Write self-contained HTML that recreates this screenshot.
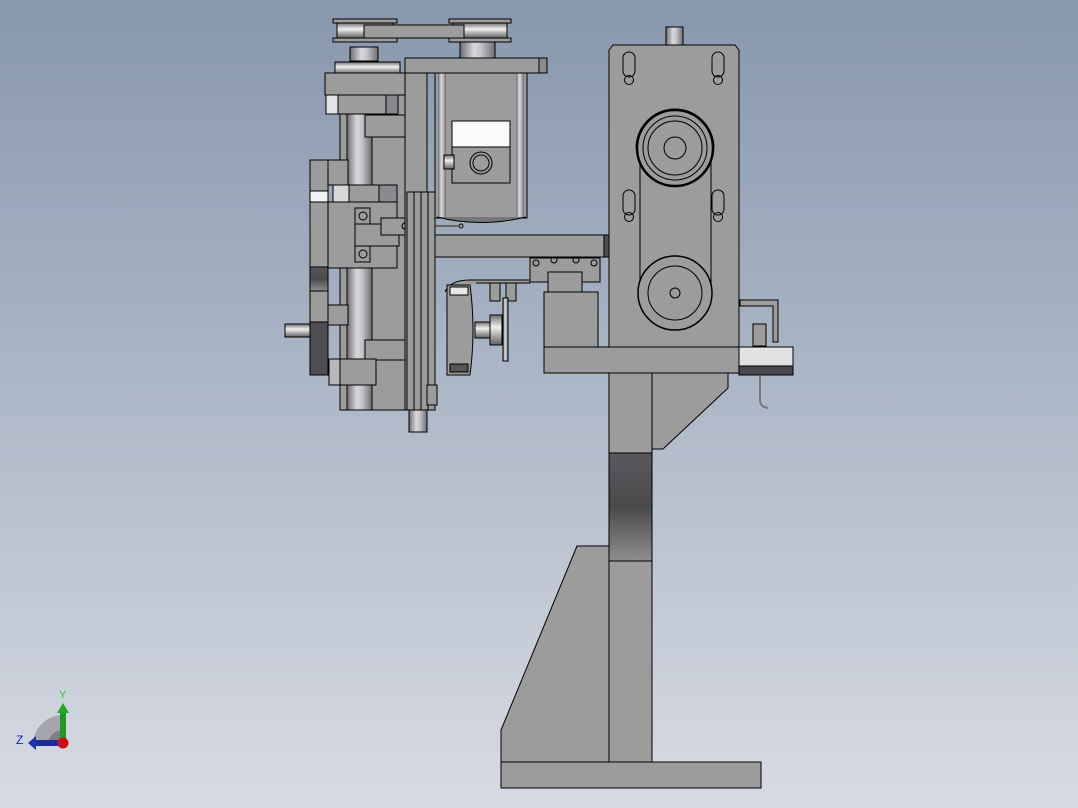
<!DOCTYPE html><html><head><meta charset="utf-8"><style>html,body{margin:0;padding:0;width:1078px;height:808px;overflow:hidden}body{background:linear-gradient(#8797ad,#b2bccb 55%,#d8dbe3)}svg{position:absolute;left:0;top:0}</style></head><body>
<svg width="1078" height="808" viewBox="0 0 1078 808" xmlns="http://www.w3.org/2000/svg">
<defs>
<linearGradient id="cy" x1="0" x2="1" y1="0" y2="0"><stop offset="0" stop-color="#6f6d73"/><stop offset=".4" stop-color="#d8d8dc"/><stop offset=".6" stop-color="#c4c4c8"/><stop offset="1" stop-color="#6f6d73"/></linearGradient>
<linearGradient id="cyh" x1="0" x2="0" y1="0" y2="1"><stop offset="0" stop-color="#707070"/><stop offset=".4" stop-color="#f0f0f0"/><stop offset="1" stop-color="#606060"/></linearGradient>
<linearGradient id="dk" x1="0" x2="0" y1="0" y2="1"><stop offset="0" stop-color="#5a575c"/><stop offset=".5" stop-color="#4a4a4c"/><stop offset="1" stop-color="#8e8e90"/></linearGradient>
</defs>
<g stroke="#000" stroke-width="1" fill="#9c9c9c">
<!-- base -->
<polygon points="577,546 609,546 609,762 501,762 501,730"/>
<rect x="501" y="762" width="260" height="26"/>
<rect x="609" y="373" width="43" height="389"/>
<rect x="609" y="453" width="43" height="108" fill="url(#dk)"/>
<polygon points="652,373 728,373 728,388 663,449 652,449"/>
<!-- right plate -->
<rect x="666" y="27" width="17" height="19" fill="url(#cy)"/>
<polygon points="613,45 735,45 739,50 739,347 609,347 609,50"/>
<g fill="none"><rect x="623" y="52" width="12" height="25" rx="6"/><rect x="712" y="52" width="12" height="25" rx="6"/><circle cx="629" cy="80" r="4.5"/><circle cx="718" cy="80" r="4.5"/>
<rect x="623" y="190" width="12" height="25" rx="6"/><rect x="712" y="190" width="12" height="25" rx="6"/><circle cx="629" cy="217" r="4.5"/><circle cx="718" cy="217" r="4.5"/>
<path d="M636,148 A39,39 0 0 1 714,148"/>
<rect x="640" y="148" width="71" height="145"/></g>
<circle cx="675" cy="148" r="38" stroke-width="2.5"/><circle cx="675" cy="148" r="32" fill="none"/><circle cx="675" cy="148" r="27" fill="none"/><circle cx="675" cy="148" r="11" fill="none"/>
<circle cx="675" cy="293" r="37" stroke-width="1.5"/><circle cx="675" cy="293" r="27" fill="none"/><circle cx="675" cy="293" r="5" fill="none"/>
<rect x="544" y="347" width="195" height="26"/>
<!-- sensor -->
<path d="M740,300 H778 V342 H773 V306 H740 Z"/><rect x="753" y="324" width="13" height="22"/>
<rect x="739" y="347" width="54" height="19" fill="#e2e2e4"/><rect x="739" y="366" width="54" height="9" fill="#4a484c"/>
<path d="M760,375 V400 Q760,407 768,408" fill="none" stroke="#777" stroke-width="2"/>
<!-- arm -->
<rect x="427" y="235" width="182" height="22"/><rect x="604" y="235" width="5" height="22" fill="#4f4d52"/>
<rect x="530" y="258" width="70" height="24"/><rect x="548" y="272" width="34" height="20"/>
<rect x="544" y="292" width="54" height="55"/>
<g fill="none"><circle cx="536" cy="263" r="3"/><circle cx="554" cy="260" r="3"/><circle cx="576" cy="260" r="3"/><circle cx="594" cy="263" r="3"/></g>
<path d="M445,292 Q450,280 470,280 H530 V283 H476"/>
<rect x="490" y="283" width="10" height="18"/><rect x="506" y="283" width="10" height="18"/>
<!-- stepper -->
<path d="M447,285 H470 Q476,330 470,375 H447 Z"/><rect x="450" y="287" width="18" height="8" fill="#e8e8ea"/><rect x="450" y="364" width="18" height="8" fill="#555"/>
<rect x="475" y="322" width="25" height="16" fill="url(#cyh)"/><rect x="490" y="315" width="12" height="30" fill="url(#cyh)"/><rect x="503" y="298" width="5" height="63" fill="url(#cy)"/>
<!-- motor -->
<rect x="435" y="73" width="92" height="145"/><rect x="438" y="73" width="8" height="145" fill="url(#cy)" stroke="none"/><rect x="516" y="73" width="8" height="145" fill="url(#cy)" stroke="none"/>
<path d="M437,217 Q480,228 526,217" fill="#777"/>
<rect x="452" y="121" width="58" height="26" fill="#fafafa"/><rect x="452" y="147" width="58" height="36"/>
<circle cx="481" cy="163" r="11" fill="none"/><circle cx="481" cy="163" r="8" fill="none"/>
<rect x="444" y="155" width="10" height="14" fill="url(#cyh)"/>
<rect x="405" y="58" width="142" height="15"/><rect x="539" y="58" width="8" height="15" fill="#8a8a90"/>
<!-- top pulleys -->
<rect x="460" y="40" width="35" height="18" fill="url(#cy)"/>
<rect x="333" y="19" width="64" height="4"/><rect x="337" y="23" width="56" height="15" fill="url(#cyh)"/><rect x="333" y="38" width="64" height="4"/>
<rect x="449" y="19" width="62" height="4"/><rect x="453" y="23" width="54" height="15" fill="url(#cyh)"/><rect x="449" y="38" width="62" height="4"/>
<rect x="364" y="25" width="100" height="13"/>
<rect x="350" y="47" width="28" height="14" fill="url(#cy)"/>
<rect x="335" y="62" width="65" height="12" fill="url(#cyh)"/>
<!-- left assembly -->
<rect x="340" y="73" width="65" height="337"/>
<rect x="347" y="100" width="25" height="310" fill="url(#cy)"/>
<rect x="365" y="115" width="40" height="22"/>
<rect x="325" y="73" width="80" height="22"/><rect x="326" y="95" width="72" height="19"/><rect x="326" y="95" width="12" height="19" fill="#e4e4e6"/><rect x="386" y="95" width="12" height="19" fill="#8a8890"/>
<rect x="310" y="160" width="18" height="215"/><rect x="310" y="191" width="18" height="11" fill="#f4f4f6"/><rect x="310" y="267" width="18" height="24" fill="url(#dk)"/><rect x="310" y="322" width="18" height="53" fill="#4f4d51"/>
<rect x="285" y="324" width="25" height="13" fill="url(#cyh)"/>
<rect x="328" y="160" width="20" height="25"/><rect x="333" y="185" width="64" height="17"/><rect x="333" y="185" width="16" height="17" fill="#d8d8da"/><rect x="379" y="185" width="18" height="17" fill="#8c8a90"/>
<rect x="328" y="202" width="69" height="66"/><rect x="355" y="208" width="15" height="54"/><rect x="355" y="224" width="44" height="22"/>
<circle cx="363" cy="216" r="4" fill="none"/><circle cx="363" cy="254" r="4" fill="none"/>
<rect x="328" y="305" width="20" height="20"/>
<rect x="365" y="340" width="40" height="20"/>
<rect x="329" y="359" width="47" height="26" fill="#b8b8ba"/><rect x="340" y="359" width="36" height="26"/>
<rect x="381" y="218" width="45" height="17"/><circle cx="405" cy="226" r="3" fill="none"/><rect x="426" y="222" width="5" height="10"/>
<path d="M431,226 H458" stroke="#666" stroke-width="2"/><circle cx="461" cy="226" r="2" fill="none"/>
<rect x="405" y="73" width="22" height="337"/>
<rect x="407" y="192" width="28" height="218"/><path d="M414,192 V410 M421,192 V410 M428,192 V410" fill="none"/>
<rect x="427" y="385" width="10" height="20"/>
<rect x="409" y="410" width="18" height="22" fill="url(#cy)"/>
</g>
<!-- triad -->
<g>
<path d="M33,745 A30,30 0 0 1 63,715 V745 Z" fill="#a4a6aa"/>
<path d="M48,745 A15,15 0 0 1 63,730 V745 Z" fill="#7c7e82"/>
<rect x="60" y="712" width="6" height="30" fill="#1f9a1f"/><polygon points="57,713 63,703 69,713" fill="#22aa22"/>
<rect x="35" y="740" width="26" height="6" fill="#1d2a9a"/><polygon points="36,736 28,743 36,750" fill="#2233aa"/>
<circle cx="63" cy="743" r="5.5" fill="#c81010"/>
<text x="59" y="698" font-family="Liberation Sans,sans-serif" font-size="11" fill="#22cc22">Y</text>
<text x="16" y="744" font-family="Liberation Sans,sans-serif" font-size="12" fill="#1020dd">Z</text>
</g>
</svg></body></html>
